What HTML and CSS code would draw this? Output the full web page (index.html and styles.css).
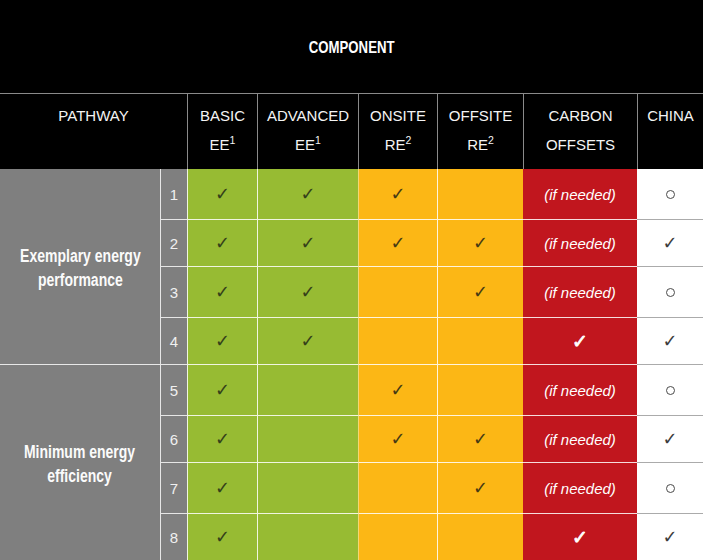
FILE: index.html
```html
<!DOCTYPE html>
<html>
<head>
<meta charset="utf-8">
<link rel="stylesheet" href="styles.css">
</head>
<body>
<div class="grid">
  <div class="comp"><span class="narrow">COMPONENT</span></div>

  <div class="hd hd-path">PATHWAY</div>
  <div class="hd sep">BASIC<br>EE<sup>1</sup></div>
  <div class="hd sep">ADVANCED<br>EE<sup>1</sup></div>
  <div class="hd sep">ONSITE<br>RE<sup>2</sup></div>
  <div class="hd sep">OFFSITE<br>RE<sup>2</sup></div>
  <div class="hd sep">CARBON<br>OFFSETS</div>
  <div class="hd sep">CHINA</div>

  <!-- group 1 -->
  <div class="group"><span class="narrow">Exemplary energy<br>performance</span></div>

  <div class="num first">1</div>
  <div class="c green first"><span class="ck">✓</span></div>
  <div class="c green adv first"><span class="ck">✓</span></div>
  <div class="c orange on first"><span class="ck">✓</span></div>
  <div class="c orange off first"></div>
  <div class="c red first"><i>(if needed)</i></div>
  <div class="c white first"><span class="circ"></span></div>

  <div class="num">2</div>
  <div class="c green"><span class="ck">✓</span></div>
  <div class="c green adv"><span class="ck">✓</span></div>
  <div class="c orange on"><span class="ck">✓</span></div>
  <div class="c orange off"><span class="ck">✓</span></div>
  <div class="c red"><i>(if needed)</i></div>
  <div class="c white"><span class="ck">✓</span></div>

  <div class="num">3</div>
  <div class="c green"><span class="ck">✓</span></div>
  <div class="c green adv"><span class="ck">✓</span></div>
  <div class="c orange on"></div>
  <div class="c orange off"><span class="ck">✓</span></div>
  <div class="c red"><i>(if needed)</i></div>
  <div class="c white"><span class="circ"></span></div>

  <div class="num">4</div>
  <div class="c green"><span class="ck">✓</span></div>
  <div class="c green adv"><span class="ck">✓</span></div>
  <div class="c orange on"></div>
  <div class="c orange off"></div>
  <div class="c red"><span class="ckw">✓</span></div>
  <div class="c white"><span class="ck">✓</span></div>

  <!-- group 2 -->
  <div class="group g2"><span class="narrow">Minimum energy<br>efficiency</span></div>

  <div class="num">5</div>
  <div class="c green"><span class="ck">✓</span></div>
  <div class="c green adv"></div>
  <div class="c orange on"><span class="ck">✓</span></div>
  <div class="c orange off"></div>
  <div class="c red"><i>(if needed)</i></div>
  <div class="c white"><span class="circ"></span></div>

  <div class="num">6</div>
  <div class="c green"><span class="ck">✓</span></div>
  <div class="c green adv"></div>
  <div class="c orange on"><span class="ck">✓</span></div>
  <div class="c orange off"><span class="ck">✓</span></div>
  <div class="c red"><i>(if needed)</i></div>
  <div class="c white"><span class="ck">✓</span></div>

  <div class="num">7</div>
  <div class="c green"><span class="ck">✓</span></div>
  <div class="c green adv"></div>
  <div class="c orange on"></div>
  <div class="c orange off"><span class="ck">✓</span></div>
  <div class="c red"><i>(if needed)</i></div>
  <div class="c white"><span class="circ"></span></div>

  <div class="num">8</div>
  <div class="c green"><span class="ck">✓</span></div>
  <div class="c green adv"></div>
  <div class="c orange on"></div>
  <div class="c orange off"></div>
  <div class="c red"><span class="ckw">✓</span></div>
  <div class="c white"><span class="ck">✓</span></div>
</div>
</body>
</html>
```
FILE: styles.css
```css
html, body {
  margin: 0;
  padding: 0;
  background: #ffffff;
}

.grid {
  display: grid;
  width: 703px;
  grid-template-columns: 160px 27px 70px 101px 79px 86px 114px 66px;
  grid-template-rows: 93px 76px 50px 47px 51px 47px 51px 47px 51px 47px;
  font-family: "Liberation Sans", Arial, sans-serif;
}

.narrow {
  display: inline-block;
  transform: scaleX(0.8);
  white-space: nowrap;
}

.comp {
  grid-column: 1 / -1;
  background: #000;
  color: #fff;
  display: flex;
  align-items: center;
  justify-content: center;
  font-weight: bold;
  font-size: 16.5px;
  padding-top: 1px;
  box-sizing: border-box;
}

.hd {
  background: #000;
  color: #f4f4f4;
  border-top: 1px solid #8a8a8a;
  font-size: 15px;
  line-height: 29px;
  padding-top: 7px;
  text-align: center;
  box-sizing: border-box;
}

.hd sup {
  font-size: 10.5px;
  line-height: 0;
  vertical-align: 6px;
}

.hd-path {
  grid-column: 1 / 3;
}

.sep {
  border-left: 1px solid #8a8a8a;
}

.group {
  grid-column: 1;
  grid-row: span 4;
  background: #7f7f7f;
  color: #fbfbfb;
  display: flex;
  align-items: center;
  justify-content: center;
  text-align: center;
  font-weight: bold;
  font-size: 17.5px;
  line-height: 24px;
  box-sizing: border-box;
  padding-top: 2px;
}

.g2 {
  border-top: 1px solid #e8e8e8;
}

.num {
  grid-column: 2;
  background: #7f7f7f;
  color: #f0f0f0;
  font-size: 15px;
  display: flex;
  align-items: center;
  justify-content: center;
  border-left: 1px solid #e6e6e6;
  border-top: 1px solid #e6e6e6;
  box-sizing: border-box;
}

.c {
  display: flex;
  align-items: center;
  justify-content: center;
  border-top: 1px solid rgba(255, 255, 255, 0.85);
  box-sizing: border-box;
}

.first {
  border-top: none;
}

.green {
  background: #97bb33;
  border-left: 1px solid rgba(255, 255, 255, 0.85);
}

.orange {
  background: #fcb715;
}

.on {
  border-left: 1px solid #f3d873;
}

.off {
  border-left: 1px solid rgba(255, 255, 255, 0.85);
}

.red {
  background: #c1161e;
  color: #fff;
  font-size: 15px;
}

.white {
  background: #fff;
  border-top: 1px solid #ababab;
}

.white.first {
  border-top: none;
}

.ck {
  font-family: "DejaVu Sans", sans-serif;
  font-size: 18px;
  color: #3c3c3c;
  line-height: 1;
}

.green .ck {
  color: #34401a;
}

.orange .ck {
  color: #463a14;
}

.ckw {
  font-family: "DejaVu Sans", sans-serif;
  font-size: 19px;
  color: #fff;
  -webkit-text-stroke: 0.8px #fff;
  line-height: 1;
}

.circ {
  display: block;
  width: 7px;
  height: 7px;
  border: 1.5px solid #4a4a4a;
  border-radius: 50%;
}
```
